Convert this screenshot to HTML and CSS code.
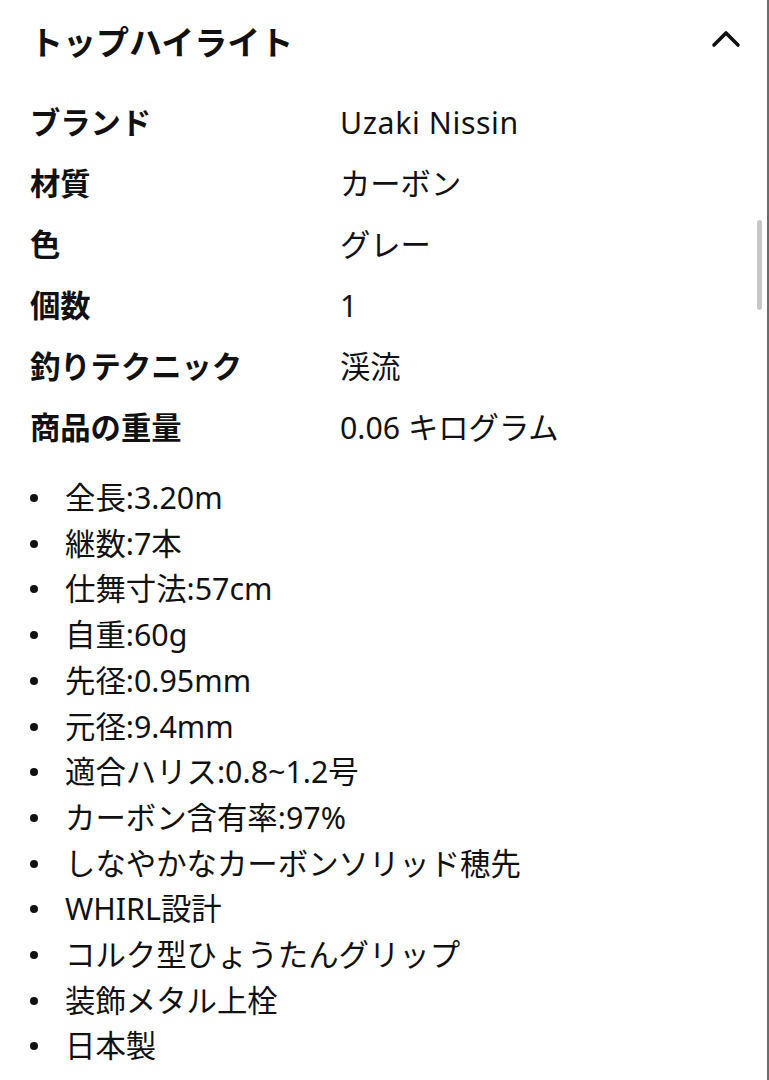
FILE: index.html
```html
<!DOCTYPE html>
<html lang="ja">
<head>
<meta charset="utf-8">
<link rel="stylesheet" href="styles.css">
</head>
<body>
<div class="page">
  <section class="panel">
    <header class="head">
      <h2 class="title">トップハイライト</h2>
      <svg class="chev" width="30" height="20" viewBox="0 0 30 20"><path d="M3 16 L15 4 L27 16" fill="none" stroke="#111" stroke-width="3.6" stroke-linecap="round" stroke-linejoin="round"/></svg>
    </header>
    <dl class="specs">
      <dt>ブランド</dt><dd class="latin">Uzaki Nissin</dd>
      <dt>材質</dt><dd>カーボン</dd>
      <dt>色</dt><dd>グレー</dd>
      <dt>個数</dt><dd>1</dd>
      <dt>釣りテクニック</dt><dd>渓流</dd>
      <dt>商品の重量</dt><dd>0.06 キログラム</dd>
    </dl>
    <ul class="bullets">
      <li>全長:3.20m</li>
      <li>継数:7本</li>
      <li>仕舞寸法:57cm</li>
      <li>自重:60g</li>
      <li>先径:0.95mm</li>
      <li>元径:9.4mm</li>
      <li>適合ハリス:0.8~1.2号</li>
      <li>カーボン含有率:97%</li>
      <li>しなやかなカーボンソリッド穂先</li>
      <li>WHIRL設計</li>
      <li>コルク型ひょうたんグリップ</li>
      <li>装飾メタル上栓</li>
      <li>日本製</li>
    </ul>
  </section>
  <div class="scrollbar"><div class="thumb"></div></div>
</div>
</body>
</html>
```
FILE: styles.css
```css
html, body {
  margin: 0;
  padding: 0;
  background: #fff;
}
body {
  font-family: "Noto Sans", "Noto Sans CJK JP", sans-serif;
  color: #111;
}
.page {
  display: flex;
  width: 769px;
  height: 1080px;
  overflow: hidden;
  box-sizing: border-box;
  border-right: 2px solid #6b6b6b;
  position: relative;
}
.panel {
  flex: 1;
  padding: 0 29px 0 30px;
}
.head {
  display: flex;
  align-items: center;
  justify-content: space-between;
  height: 84px;
}
.title {
  margin: 0;
  font-size: 33px;
  font-weight: 700;
  line-height: 1;
}
.chev {
  display: block;
  margin-right: -3px;
  margin-top: -6px;
}
.specs {
  display: grid;
  grid-template-columns: 310px 1fr;
  grid-auto-rows: 61px;
  align-items: center;
  margin: 9px 0 0 0;
}
.specs dt {
  font-weight: 700;
  font-size: 30.3px;
  line-height: 1;
}
.specs dd {
  margin: 0;
  font-size: 30.3px;
  line-height: 1;
}
.specs .latin {
  letter-spacing: 0.6px;
}
.bullets {
  margin: 16px 0 0 0;
  padding: 0 0 0 35px;
  font-size: 30.4px;
  line-height: 45.7px;
}
.bullets li {
  list-style: none;
  position: relative;
}
.bullets li::before {
  content: "";
  position: absolute;
  left: -35px;
  top: 19px;
  width: 8px;
  height: 8px;
  border-radius: 50%;
  background: #111;
}
.scrollbar {
  position: absolute;
  right: 5px;
  top: 220px;
  width: 5px;
  height: 90px;
}
.thumb {
  width: 100%;
  height: 100%;
  border-radius: 3px;
  background: #c8c8c8;
}
```
